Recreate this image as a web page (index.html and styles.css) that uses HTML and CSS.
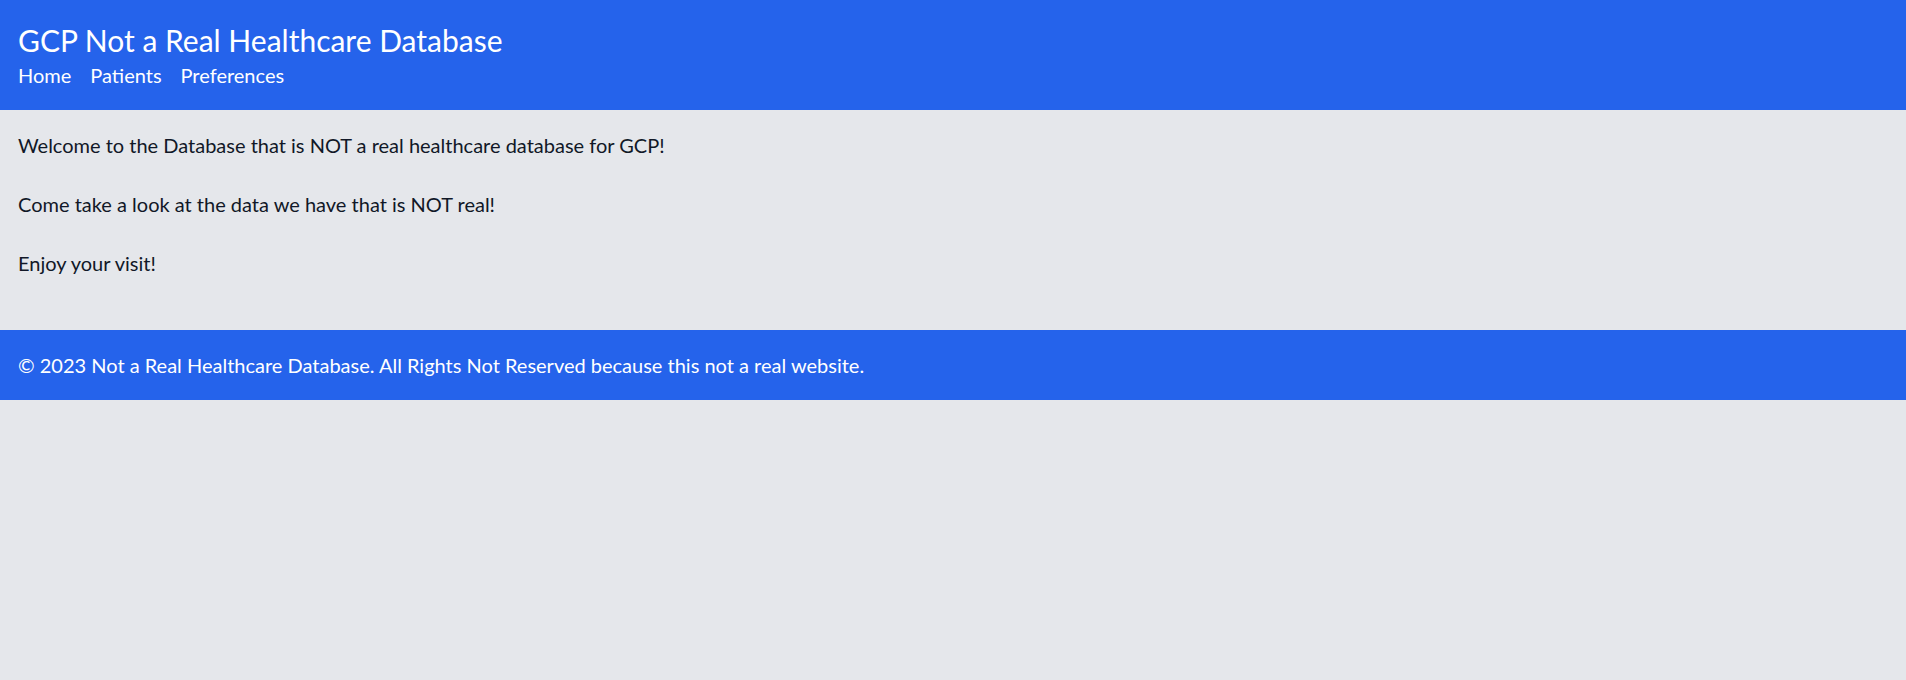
FILE: index.html
```html
<!DOCTYPE html>
<html lang="en">
<head>
<meta charset="utf-8">
<title>GCP Not a Real Healthcare Database</title>
<link rel="stylesheet" href="styles.css">
</head>
<body>
<header class="site-header">
  <h1 class="site-title">GCP Not a Real Healthcare Database</h1>
  <nav class="site-nav">
    <a href="#" class="nav-link">Home</a>
    <a href="#" class="nav-link">Patients</a>
    <a href="#" class="nav-link">Preferences</a>
  </nav>
</header>
<main class="content">
  <p>Welcome to the Database that is NOT a real healthcare database for GCP!</p>
  <p>Come take a look at the data we have that is NOT real!</p>
  <p>Enjoy your visit!</p>
</main>
<footer class="site-footer">
  <p>&copy; 2023 Not a Real Healthcare Database. All Rights Not Reserved because this not a real website.</p>
</footer>
</body>
</html>
```
FILE: styles.css
```css
html, body {
  margin: 0;
  padding: 0;
}
body {
  background: #e5e7eb;
  color: #111827;
  font-family: "Lato", "Segoe UI", sans-serif;
  font-size: 20px;
  line-height: 30px;
  min-height: 680px;
}
.site-header {
  background: #2563eb;
  color: #ffffff;
  padding: 20px 18px;
}
.site-title {
  margin: 0;
  font-size: 30px;
  line-height: 40px;
  font-weight: 400;
}
.site-nav {
  display: flex;
  gap: 19px;
}
.nav-link {
  color: #ffffff;
  text-decoration: none;
}
.content {
  display: flex;
  flex-direction: column;
  gap: 29px;
  padding: 20px 18px 52px;
}
.content p {
  margin: 0;
}
.site-footer {
  background: #2563eb;
  color: #ffffff;
  padding: 20px 18px;
}
.site-footer p {
  margin: 0;
}
```
